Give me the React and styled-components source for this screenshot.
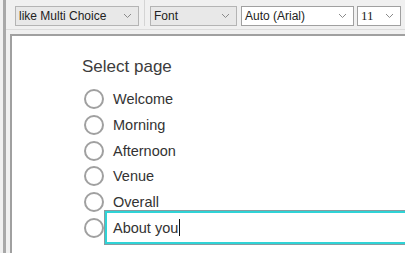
import React from 'react';
import styled, { createGlobalStyle } from 'styled-components';

const GlobalStyle = createGlobalStyle`
    html, body {
        margin: 0;
        padding: 0;
        width: 405px;
        height: 253px;
        overflow: hidden;
        background: #f0f0f0;
        font-family: 'Liberation Sans', Arial, sans-serif;
    }
`;

const pages = ['Welcome', 'Morning', 'Afternoon', 'Venue', 'Overall'];

const Chevron = () => (
    <svg width='9' height='6' viewBox='0 0 9 6'>
        <path d='M1 1 L4.5 4.5 L8 1' fill='none' stroke='#8a8a8a' strokeWidth='1' />
    </svg>
);

const Select = ({ label, width, muted, mono, offset }) => (
    <SelectBox width={width} muted={muted} offset={offset}>
        <SelectText mono={mono}>{label}</SelectText>
        <Chevron />
    </SelectBox>
);

const App = () => (
    <Window>
        <GlobalStyle />
        <EdgeStrip />
        <Main>
            <Toolbar>
                <Select label='like Multi Choice' width={124} muted />
                <ToolSep />
                <Select label='Font' width={87} muted />
                <Select label='Auto (Arial)' width={113} offset={4} />
                <Select label='11' width={44} offset={3} mono />
            </Toolbar>
            <Panel>
                <Question>
                    <Title>Select page</Title>
                    <Options>
                        {pages.map(p => (
                            <Option key={p}>
                                <Radio />
                                <Label>{p}</Label>
                            </Option>
                        ))}
                        <Option>
                            <Radio />
                            <EditBox>
                                <Label>About you</Label>
                                <Caret />
                            </EditBox>
                        </Option>
                    </Options>
                </Question>
            </Panel>
        </Main>
    </Window>
);

const Window = styled.div`
    display: flex;
    width: 405px;
    height: 253px;
    background: #f0f0f0;
`;

const EdgeStrip = styled.div`
    width: 3px;
    margin-left: 3px;
    background: #a8a8a8;
    flex-shrink: 0;
`;

const Main = styled.div`
    flex: 1;
    display: flex;
    flex-direction: column;
    min-width: 0;
`;

const Toolbar = styled.div`
    display: flex;
    align-items: center;
    height: 30px;
    padding: 2px 0 0 9px;
    box-sizing: border-box;
    border-bottom: 1px solid #dcdcdc;
    margin-bottom: 4px;
`;

const ToolSep = styled.div`
    width: 1px;
    height: 26px;
    margin: -2px 5px 0 5px;
    background: #d4d4d4;
    align-self: flex-start;
`;

const SelectBox = styled.div`
    display: flex;
    align-items: center;
    justify-content: space-between;
    width: ${p => p.width}px;
    height: 20px;
    margin-left: ${p => p.offset || 0}px;
    box-sizing: border-box;
    padding: 0 6px 0 3px;
    border: 1px solid ${p => (p.muted ? '#b4b4b4' : '#a0a0a0')};
    background: ${p => (p.muted ? '#e8e8e8' : '#ffffff')};
    flex-shrink: 0;
`;

const SelectText = styled.span`
    font-family: ${p => (p.mono ? "'Liberation Serif', serif" : "'Liberation Sans', Arial, sans-serif")};
    font-size: ${p => (p.mono ? '13px' : '12px')};
    color: #222;
    white-space: nowrap;
`;

const Panel = styled.div`
    flex: 1;
    margin-left: 4px;
    background: #ffffff;
    border-top: 2px solid #a0a0a0;
    border-left: 2px solid #a0a0a0;
    padding: 21px 0 0 70px;
    box-sizing: border-box;
    overflow: hidden;
`;

const Question = styled.div`
    display: flex;
    flex-direction: column;
`;

const Title = styled.div`
    font-family: Arial, 'Liberation Sans', sans-serif;
    font-size: 17px;
    color: #3c3c3c;
    margin-bottom: 12px;
`;

const Options = styled.div`
    display: flex;
    flex-direction: column;
    gap: 5.8px;
`;

const Option = styled.div`
    display: flex;
    align-items: center;
    height: 20px;
    gap: 9px;
    padding-left: 2px;
`;

const Radio = styled.span`
    width: 16px;
    height: 16px;
    border: 2px solid #a0a0a0;
    border-radius: 50%;
    background: #fff;
    flex-shrink: 0;
`;

const Label = styled.span`
    font-family: Arial, 'Liberation Sans', sans-serif;
    font-size: 14.5px;
    color: #333;
    white-space: nowrap;
`;

const EditBox = styled.div`
    display: flex;
    align-items: center;
    margin-left: -8px;
    width: 320px;
    height: 33px;
    box-sizing: border-box;
    padding-left: 6px;
    border: 2px solid #2fd3d6;
    outline: 1px solid #8a9ca0;
    background: #fff;
    flex-shrink: 0;
`;

const Caret = styled.span`
    width: 1px;
    height: 17px;
    background: #111;
    margin-left: 1px;
`;

export default App;
